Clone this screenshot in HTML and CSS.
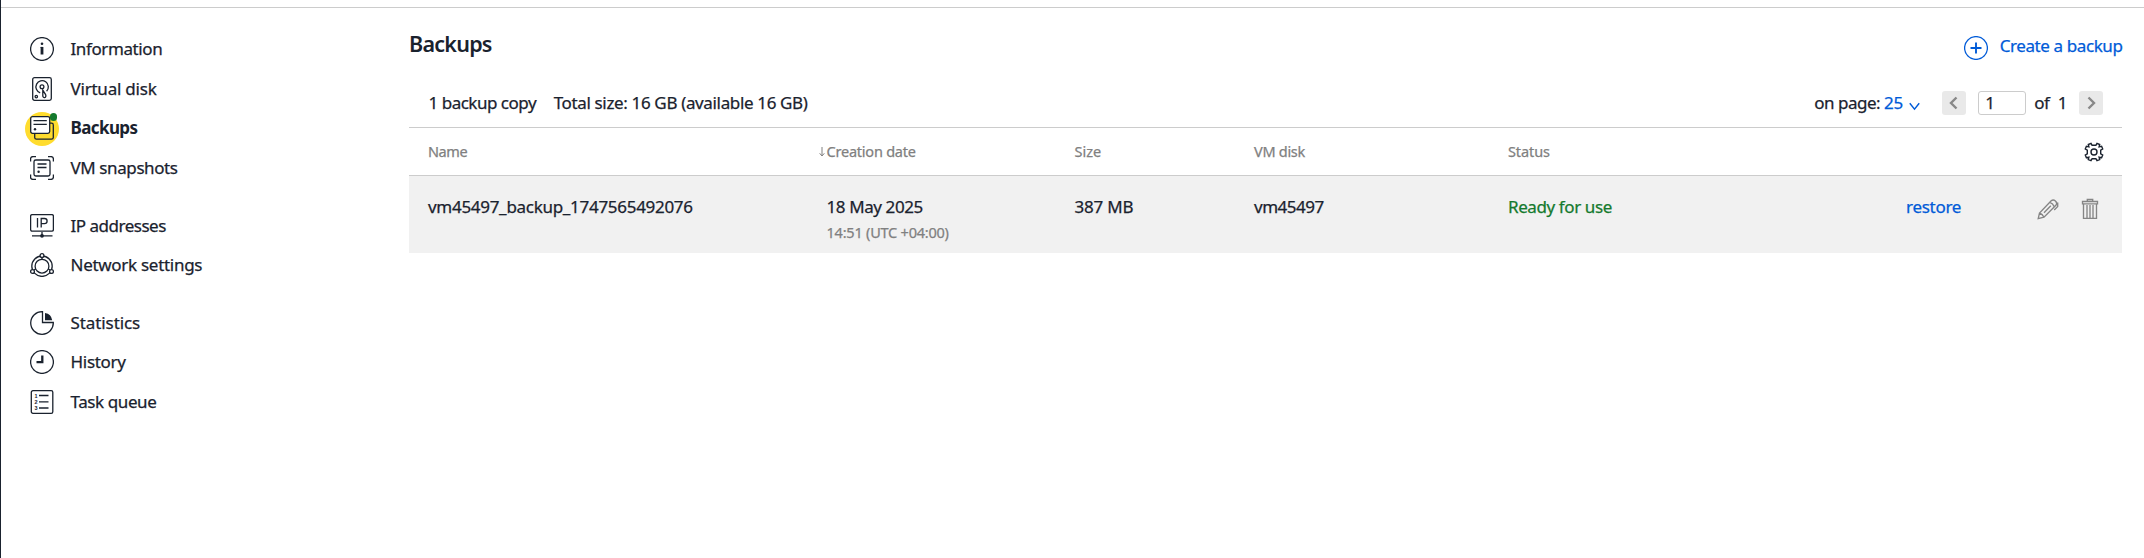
FILE: index.html
```html
<!DOCTYPE html>
<html lang="en">
<head>
<meta charset="utf-8">
<title>Backups</title>
<link rel="stylesheet" href="styles.css">
</head>
<body>
<div class="page">
  <nav class="sidebar">
    <div class="nav-group">
      <a class="nav-item"><svg class="icon" viewBox="0 0 24 24"><circle cx="12" cy="12" r="11.4"/><path d="M12 10v7.5" stroke-width="2.8"/><path d="M10.6 10.4h2" stroke-width="1"/><circle class="fill" cx="12" cy="6.8" r="1.3"/></svg><span class="snug-4">Information</span></a>
      <a class="nav-item"><svg class="icon" viewBox="0 0 24 24"><rect x="2.7" y=".7" width="18.6" height="22.6" rx="1.8"/><path d="M10.2 15.8A6.2 6.2 0 1 1 16.6 14.2"/><circle cx="12" cy="9.8" r="1.9"/><path d="M12.8 13.2l2.8 4.4c.6 1.2.2 2.8-.9 3-1.2.2-1.9-.7-1.9-1.9z"/><circle cx="6.3" cy="19.6" r="1.2"/></svg><span class="snug-2">Virtual disk</span></a>
      <a class="nav-item active"><span class="halo"><svg class="icon" viewBox="0 0 24 24"><rect x="4.7" y="7.2" width="18.6" height="16" rx="1.8"/><rect class="paper" x=".7" y=".7" width="19" height="16.6" rx="1.8"/><path d="M3.5 4.7h13.3M3.5 8.3h13.3"/><circle class="fill" cx="5" cy="13.2" r="1.2"/></svg><i class="dot"></i></span><span class="snug-6">Backups</span></a>
      <a class="nav-item"><svg class="icon" viewBox="0 0 24 24"><path d="M.6 5.5V3Q.6.6 3 .6H6M18 .6h3q2.400 0 2.400 2.400v2.500M23.400 18.500V21q0 2.400-2.400 2.400h-3M6 23.400H3Q.6 23.400.6 21v-2.500"/><rect x="4" y="4" width="16" height="16" rx="1.8"/><path d="M7.500 8h9M7.500 11.500h9"/><circle class="fill" cx="8.600" cy="15.700" r="1.200"/></svg><span class="snug-4">VM snapshots</span></a>
    </div>
    <div class="nav-group">
      <a class="nav-item"><svg class="icon" viewBox="0 0 24 24"><rect x=".6" y=".6" width="22.8" height="16.6" rx="1.6"/><path d="M7.500 4v9.500M11.200 13.500V4.500h3.300a2.600 2.600 0 0 1 0 5.200h-3.300M2 21.800h20.500M12 18v3.500"/><circle class="fill" cx="12" cy="21.800" r="1.900"/></svg><span class="snug-5">IP addresses</span></a>
      <a class="nav-item"><svg class="icon" viewBox="0 0 24 24"><circle cx="12" cy="13.200" r="10.200"/><circle cx="12" cy="13.200" r="6.900"/><path d="M12 4.500v2M3.800 17l2-1M20.200 17l-2-1"/><circle class="paper" cx="12" cy="2.600" r="1.900"/><circle class="paper" cx="2.500" cy="18.500" r="1.900"/><circle class="paper" cx="21.500" cy="18.500" r="1.900"/></svg><span class="snug-3">Network settings</span></a>
    </div>
    <div class="nav-group">
      <a class="nav-item"><svg class="icon" viewBox="0 0 24 24"><path d="M12.500 11.500V.7A11.300 11.300 0 1 0 23.300 11.500z"/><path class="fill" d="M15 9.200V2a8.500 8.500 0 0 1 7.200 7.200z"/></svg><span class="snug-1">Statistics</span></a>
      <a class="nav-item history"><svg class="icon" viewBox="0 0 24 24"><circle cx="12" cy="12" r="11.400"/><path d="M12.300 5.500v6.600H6.500" stroke-width="2.300"/></svg><span class="snug-3">History</span></a>
      <a class="nav-item"><svg class="icon" viewBox="0 0 24 24"><rect x="1.300" y=".7" width="21.500" height="22.600" rx="1.600"/><path d="M9 5.500h9.500M9 11.800h9.500M9 18h9.500"/><g class="digits"><text x="4.500" y="7.800">1</text><text x="4.500" y="14.100">2</text><text x="4.500" y="20.300">3</text></g></svg><span class="snug-4">Task queue</span></a>
    </div>
  </nav>
  <main class="content">
    <header class="heading">
      <h1>Backups</h1>
      <a class="create"><svg class="icon" viewBox="0 0 24 24"><circle cx="12" cy="12" r="11.400"/><path d="M12 6.500v11M6.500 12h11" stroke-width="1.900"/></svg><span class="snug-4">Create a backup</span></a>
    </header>
    <div class="toolbar">
      <span class="snug-5">1 backup copy</span>
      <span class="total">Total size: 16 GB (available 16 GB)</span>
      <div class="pager">
        <span class="snug-5">on page:</span>
        <a class="per-page"><span class="snug-2">25</span><svg class="chevron" viewBox="0 0 10 8"><path d="M.7 1l4.300 5.400L9.300 1"/></svg></a>
        <button class="step"><svg viewBox="0 0 24 24"><path d="M14.500 6.500L9 12l5.500 5.500"/></svg></button>
        <input class="page-no" value="1">
        <span class="of">of</span><span class="pages">1</span>
        <button class="step"><svg viewBox="0 0 24 24"><path d="M9.500 6.500L15 12l-5.500 5.500"/></svg></button>
      </div>
    </div>
    <section class="table">
      <div class="row head">
        <span class="snug-4">Name</span>
        <span class="sorted snug-2"><svg class="sort" viewBox="0 0 6 10"><path d="M3 0v8.500M.7 6.300L3 9l2.300-2.700"/></svg>Creation date</span>
        <span>Size</span>
        <span class="snug-3">VM disk</span>
        <span class="snug-1">Status</span>
        <span></span>
        <svg class="gear" viewBox="0 0 20 20"><path d="M8.100 3.300L7 1.300 4.300 2.500l.6 2.400L2.400 4.300 1.300 7l2 1.200v3.600l-2 1.200 1.100 2.700 2.500-.6-.6 2.400L7 18.700l1.100-2h3.800l1.100 2 2.700-1.200-.6-2.400 2.500.6 1.100-2.700-2-1.200V8.200l2-1.200-1.100-2.700-2.500.6.6-2.400L13 1.300l-1.100 2z"/><circle cx="10" cy="10" r="3"/></svg>
      </div>
      <div class="row entry">
        <span class="snug-3">vm45497_backup_1747565492076</span>
        <span class="date snug-4">18 May 2025<small class="snug-2">14:51 (UTC +04:00)</small></span>
        <span class="snug-2">387 MB</span>
        <span class="snug-5">vm45497</span>
        <span class="ready snug-4">Ready for use</span>
        <a class="snug-3">restore</a>
        <span class="actions">
          <svg viewBox="0 0 22 22"><path d="M1.200 20.600l1.300-5.600L14.200 2.800q2-1.800 4.200.1 2.400 2.100.5 4.300L7 19.200zM2.500 15q3 1 4.500 4.200M12.800 4.400q3.200 1 4.500 4.400M7 14.800l6.800-7M20.700 4.500v4l-3.500 3.500"/></svg>
          <svg viewBox="0 0 22 22"><path d="M4.500 6v14.400h13V6M3.500 5.800V3.500h15v2.300zM8.300 3.300V1.500h5.400v1.800M8 7v13M11 7v13M14 7v13"/></svg>
        </span>
      </div>
    </section>
  </main>
</div>
</body>
</html>
```
FILE: styles.css
```css
* { box-sizing: border-box; }
body { margin: 0; background: #fff; color: #1a222e; font: 17px/24px "Noto Sans", "Open Sans", sans-serif; -webkit-text-stroke: .25px; }
svg { display: block; flex: none; fill: none; stroke: currentColor; }
a { color: #005bd8; text-decoration: none; white-space: nowrap; }
.snug-1 { letter-spacing: -.09px; }
.snug-2 { letter-spacing: -.22px; }
.snug-3 { letter-spacing: -.29px; }
.snug-4 { letter-spacing: -.4px; }
.snug-5 { letter-spacing: -.49px; }
.snug-6 { letter-spacing: -.6px; }
.page { height: 558px; display: flex; border-left: 1px solid #1a222e; position: relative; overflow: hidden; }
.page::before { content: ""; position: absolute; left: 0; right: 0; top: 7px; height: 1px; background: #ccc; }
.sidebar { width: 408px; padding: 37px 0 0 29px; }
.nav-group { margin-bottom: 18.5px; }
.nav-item { height: 39.5px; display: flex; align-items: flex-start; gap: 16.5px; color: inherit; }
.history { height: 39px; margin: -.5px 0 1px; }
.icon { width: 24px; height: 24px; stroke-width: 1.3; }
.fill { fill: currentColor; stroke: none; }
.paper { fill: #fff; }
.digits { fill: currentColor; stroke: none; font: bold 5.5px "Liberation Sans", sans-serif; }
.active { font-weight: 700; -webkit-text-stroke: 0; }
.halo { position: relative; width: 24px; height: 24px; }
.halo::before { content: ""; position: absolute; left: -5px; top: -4.5px; width: 34px; height: 34px; border-radius: 50%; background: #ffdc2e; }
.halo .icon { position: relative; }
.dot { position: absolute; right: -3px; top: -3px; width: 7.5px; height: 7.5px; border-radius: 50%; background: #147a2e; }
.content { width: 1713px; padding-top: 30px; }
.heading { display: flex; justify-content: space-between; height: 52px; }
h1 { margin: 0; font-size: 21.5px; line-height: 28px; font-weight: 600; letter-spacing: -.75px; -webkit-text-stroke: 0; }
.create { display: flex; gap: 12px; margin-top: 4px; }
.create span { margin-right: -.5px; }
.create .icon { margin-top: 2px; }
.toolbar { height: 46px; padding: 9px 19px 0 19.5px; display: flex; align-items: flex-start; border-bottom: 1px solid #ccc; white-space: nowrap; }
.total { margin-left: 17.5px; letter-spacing: -.35px; }
.pager { margin-left: auto; display: flex; }
.per-page { display: flex; margin-left: 4px; }
.chevron { width: 11px; height: 9px; margin: 11px 0 0 6px; stroke-width: 1.3; }
.step { width: 24px; height: 24px; padding: 0; border: 0; border-radius: 3px; background: #e9e9e9; color: #888; }
.step svg { stroke-width: 2.4; }
.per-page + .step { margin-left: 22px; }
.page-no { width: 48px; height: 24px; margin: 0 8px 0 12px; padding: 0 6px; border: 1px solid #ccc; border-radius: 3px; font: inherit; color: inherit; }
.of { letter-spacing: -.5px; }
.pages { margin: 0 11.5px 0 8.5px; }
.row { display: grid; grid-template-columns: 398.5px 248px 179.5px 254px 398px 124px 1fr; padding-left: 19px; white-space: nowrap; }
.head { height: 48px; padding-top: 11px; border-bottom: 1px solid #ccc; color: #808080; font-size: 14.5px; }
.sorted { position: relative; }
.sort { position: absolute; left: -8px; top: 8px; width: 6px; height: 10px; }
.gear { width: 20px; height: 20px; margin: 3px 0 0 54px; color: #1a222e; stroke-width: 1.4; }
.entry { height: 77px; padding-top: 19px; background: #f1f1f1; }
.date small { display: block; color: #808080; font-size: 14.5px; line-height: 24px; margin-top: 1px; }
.ready { color: #147a2e; }
.actions { display: flex; gap: 20px; margin: 3px 0 0 7px; color: #858585; }
.actions svg { width: 22px; height: 22px; stroke-width: 1.35; }
```
